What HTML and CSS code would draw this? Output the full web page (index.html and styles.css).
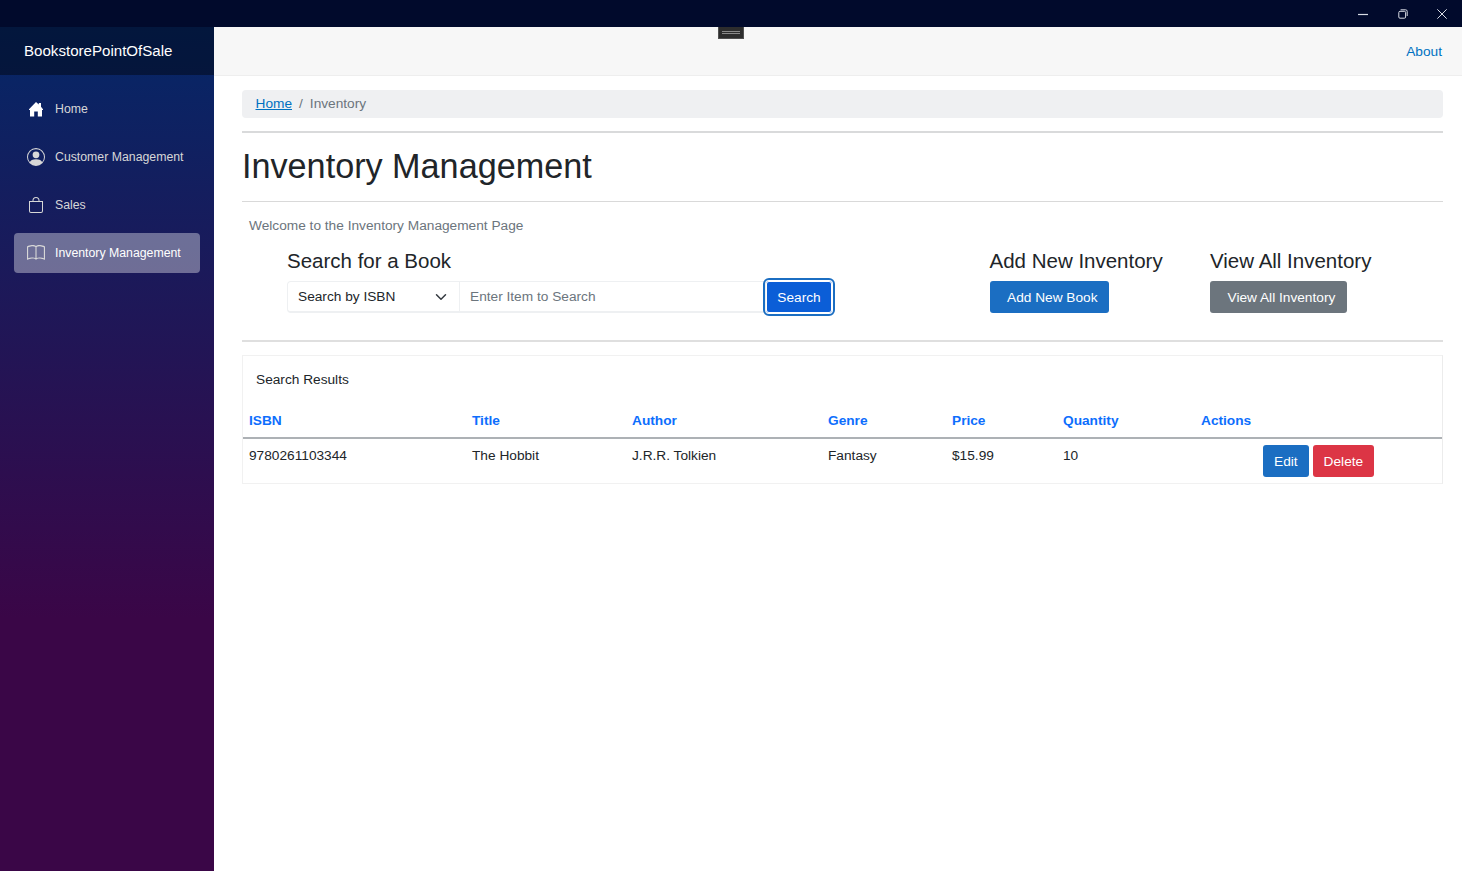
FILE: index.html
```html
<!DOCTYPE html>
<html lang="en">
<head>
  <meta charset="UTF-8">
  <title>BookstorePointOfSale</title>
  <link rel="stylesheet" href="styles.css">
</head>
<body>

  <!-- Window title bar -->
  <div class="titlebar">
    <div class="win-btn">
      <svg width="10" height="10" viewBox="0 0 10 10"><path d="M0 5.5H10" stroke="#d8dbe4" stroke-width="1.2"/></svg>
    </div>
    <div class="win-btn">
      <svg width="10" height="10" viewBox="0 0 10 10" fill="none" stroke="#d8dbe4"><rect x="0.8" y="2.3" width="6.8" height="6.9" rx="1.2"/><path d="M2.6 0.8H7.6Q9.2 0.8 9.2 2.4V7"/></svg>
    </div>
    <div class="win-btn">
      <svg width="10" height="10" viewBox="0 0 10 10"><path d="M0.3 0.3L9.7 9.7M9.7 0.3L0.3 9.7" stroke="#d8dbe4" stroke-width="1"/></svg>
    </div>
  </div>

  <div class="debug-handle"><span></span></div>

  <div class="app">
    <!-- Sidebar -->
    <aside class="sidebar">
      <div class="brand">BookstorePointOfSale</div>
      <nav class="nav">
        <a class="nav-item" href="#">
          <svg class="nav-icon small" viewBox="0 0 16 16" fill="#fff"><path d="M8 1 10.8 3.6V2H13V5.7L15 8.2V9H14V15.5H9.8V10.5H6.2V15.5H2V9H1V8.2Z"/></svg>
          Home
        </a>
        <a class="nav-item" href="#">
          <svg class="nav-icon" viewBox="0 0 16 16" fill="#d7d7d7"><path d="M11 6a3 3 0 1 1-6 0 3 3 0 0 1 6 0z"/><path fill-rule="evenodd" d="M0 8a8 8 0 1 1 16 0A8 8 0 0 1 0 8zm8-7a7 7 0 0 0-5.468 11.37C3.242 11.226 4.805 10 8 10s4.757 1.225 5.468 2.37A7 7 0 0 0 8 1z"/></svg>
          Customer Management
        </a>
        <a class="nav-item" href="#">
          <svg class="nav-icon small" viewBox="0 0 16 16" fill="#d7d7d7"><path d="M8 1a2.5 2.5 0 0 1 2.5 2.5V4h-5v-.5A2.5 2.5 0 0 1 8 1zm3.5 3v-.5a3.5 3.5 0 1 0-7 0V4H1v10a2 2 0 0 0 2 2h10a2 2 0 0 0 2-2V4h-3.5zM2 5h12v9a1 1 0 0 1-1 1H3a1 1 0 0 1-1-1V5z"/></svg>
          Sales
        </a>
        <a class="nav-item active" href="#">
          <svg class="nav-icon" viewBox="0 0 16 16" fill="#d7d7d7"><path d="M1 2.828c.885-.37 2.154-.769 3.388-.893 1.33-.134 2.458.063 3.112.752v9.746c-.935-.53-2.12-.603-3.213-.493-1.18.12-2.37.461-3.287.811V2.828zm7.5-.141c.654-.689 1.782-.886 3.112-.752 1.234.124 2.503.523 3.388.893v9.923c-.918-.35-2.107-.692-3.287-.81-1.094-.111-2.278-.039-3.213.492V2.687zM8 1.783C7.015.936 5.587.81 4.287.94c-1.514.153-3.042.672-3.994 1.105A.5.5 0 0 0 0 2.5v11a.5.5 0 0 0 .707.455c.882-.4 2.303-.881 3.68-1.02 1.409-.142 2.59.087 3.223.877a.5.5 0 0 0 .78 0c.633-.79 1.814-1.019 3.222-.877 1.378.139 2.8.62 3.681 1.02A.5.5 0 0 0 16 13.5v-11a.5.5 0 0 0-.293-.455c-.952-.433-2.48-.952-3.994-1.105C10.413.809 8.985.936 8 1.783z"/></svg>
          Inventory Management
        </a>
      </nav>
    </aside>

    <main class="main">
      <div class="top-row"><a href="#">About</a></div>

      <div class="content">
        <div class="breadcrumb">
          <a href="#">Home</a>
          <span class="sep">/</span>
          <span class="current">Inventory</span>
        </div>
        <hr class="rule first">
        <h1>Inventory Management</h1>
        <hr class="rule">
        <p class="welcome">Welcome to the Inventory Management Page</p>

        <div class="tools">
          <div class="search-col">
            <h4>Search for a Book</h4>
            <div class="input-group">
              <div class="select-box">
                Search by ISBN
                <svg width="12" height="12" viewBox="0 0 16 16" fill="none" stroke="#343a40" stroke-width="2" stroke-linecap="round" stroke-linejoin="round"><path d="M2 5l6 6 6-6"/></svg>
              </div>
              <div class="search-input">Enter Item to Search</div>
              <button class="btn btn-blue btn-focus">Search</button>
            </div>
          </div>
          <div class="add-col">
            <h4>Add New Inventory</h4>
            <button class="btn btn-blue btn-add">Add New Book</button>
          </div>
          <div class="view-col">
            <h4>View All Inventory</h4>
            <button class="btn btn-gray btn-add">View All Inventory</button>
          </div>
        </div>

        <hr class="rule third">

        <div class="results">
          <div class="results-title">Search Results</div>
          <table>
            <thead>
              <tr>
                <th class="c-isbn">ISBN</th>
                <th class="c-title">Title</th>
                <th class="c-author">Author</th>
                <th class="c-genre">Genre</th>
                <th class="c-price">Price</th>
                <th class="c-qty">Quantity</th>
                <th>Actions</th>
              </tr>
            </thead>
            <tbody>
              <tr>
                <td>9780261103344</td>
                <td>The Hobbit</td>
                <td>J.R.R. Tolkien</td>
                <td>Fantasy</td>
                <td>$15.99</td>
                <td>10</td>
                <td class="actions">
                  <button class="btn btn-edit">Edit</button>
                  <button class="btn btn-delete">Delete</button>
                </td>
              </tr>
            </tbody>
          </table>
        </div>
      </div>
    </main>
  </div>

</body>
</html>
```

FILE: styles.css
```css
* {
  box-sizing: border-box;
}

html, body {
  height: 100%;
}

body {
  margin: 0;
  font-family: "Liberation Sans", Arial, sans-serif;
  font-size: 13.7px;
  color: #212529;
  background-color: #fff;
  display: flex;
  flex-direction: column;
  overflow: hidden;
}

.titlebar {
  height: 27px;
  flex: none;
  background-color: #010a2c;
  display: flex;
  justify-content: flex-end;
  align-items: center;
}

.win-btn {
  width: 39.5px;
  display: flex;
  justify-content: center;
  align-items: center;
}

.debug-handle {
  position: absolute;
  top: 27px;
  left: 718px;
  width: 26px;
  height: 12px;
  background-color: #2d2d2d;
  border: 1px solid #505050;
  border-top: none;
  display: flex;
  justify-content: center;
  align-items: center;
}

.debug-handle span {
  display: block;
  width: 18px;
  height: 3px;
  border-top: 1px solid #8a8a8a;
  border-bottom: 1px solid #8a8a8a;
}

.app {
  flex: 1;
  display: flex;
  min-height: 0;
}

.sidebar {
  width: 214px;
  flex: none;
  background-image: linear-gradient(180deg, rgb(5, 39, 103) 0%, #3a0647 70%);
}

.brand {
  height: 48px;
  padding-left: 24px;
  padding-bottom: 2px;
  display: flex;
  align-items: center;
  color: #fff;
  font-size: 15.1px;
  background-color: rgba(0, 0, 0, 0.4);
}

.nav {
  padding-top: 14px;
}

.nav-item {
  display: flex;
  align-items: center;
  height: 40px;
  margin: 0 14px 8px;
  padding-left: 13px;
  border-radius: 4px;
  color: #d7d7d7;
  font-size: 12.3px;
  text-decoration: none;
}

.nav-item.active {
  background-color: rgba(255, 255, 255, 0.37);
  color: #fff;
}

.nav-icon {
  width: 18px;
  height: 18px;
  margin-right: 10px;
  flex: none;
}

.nav-icon.small {
  width: 16px;
  height: 16px;
  margin: 0 11px 0 1px;
}

.main {
  flex: 1;
  min-width: 0;
}

.top-row {
  height: 49px;
  background-color: #f7f7f7;
  border-bottom: 1px solid #eeeeee;
  display: flex;
  justify-content: flex-end;
  align-items: center;
  padding-right: 20px;
}

.top-row a {
  color: #0071c1;
  text-decoration: none;
}

.content {
  padding: 14px 19.5px 0 28px;
}

.breadcrumb {
  height: 28px;
  display: flex;
  align-items: center;
  padding-left: 13.5px;
  padding-bottom: 1px;
  background-color: #eff0f2;
  border-radius: 4px;
  color: #6c757d;
}

.breadcrumb a {
  color: #0071c1;
}

.sep {
  margin: 0 7px;
}

.rule {
  margin: 0;
  border: none;
  border-top: 1px solid #d9d9d9;
}

.rule.first {
  margin-top: 13px;
  border-top-width: 2px;
  border-top-color: #d9dadb;
}

.rule.third {
  border-top-width: 2px;
  border-top-color: #dfdfdf;
  margin-top: 27px;
}

h1 {
  margin: 0;
  height: 68px;
  padding-bottom: 2px;
  display: flex;
  align-items: center;
  font-size: 34.2px;
  font-weight: 400;
}

.welcome {
  margin: 15px 0 0 7px;
  color: #6c757d;
  line-height: 17px;
}

.tools {
  display: flex;
  margin-top: 14px;
  padding-left: 45px;
}

h4 {
  margin: 0 0 8px;
  font-size: 20.5px;
  font-weight: 400;
  line-height: 25px;
}

.search-col {
  width: 702.5px;
}

.add-col {
  width: 220.5px;
}

.input-group {
  display: flex;
  width: 545px;
  height: 32px;
}

.select-box {
  width: 173px;
  padding: 0 12px 0 10px;
  display: flex;
  justify-content: space-between;
  align-items: center;
  border: 1px solid #eef0f2;
  border-bottom-width: 2px;
  border-radius: 4px 0 0 4px;
}

.search-input {
  flex: 1;
  display: flex;
  align-items: center;
  padding-left: 10px;
  color: #6c757d;
  border: 1px solid #eef0f2;
  border-left: none;
  border-bottom-width: 2px;
}

.btn {
  font-family: inherit;
  font-size: 13.7px;
  color: #fff;
  border: none;
  border-radius: 3px;
  cursor: pointer;
}

.btn-blue {
  background-color: #1b6ec2;
}

.btn-gray {
  background-color: #6c757d;
}

.btn-focus {
  width: 66px;
  background-color: #0b5ed7;
  outline: 2px solid #1b6ec2;
  outline-offset: 1px;
  box-shadow: 0 0 0 1px #fff inset;
}

.btn-add {
  height: 32px;
  padding: 0 11.5px 0 17.5px;
}

.results {
  margin-top: 13px;
  border: 1px solid #f1f1f1;
  border-right-color: #ececec;
}

.results-title {
  height: 47px;
  padding-left: 13px;
  display: flex;
  align-items: center;
}

table {
  width: 100%;
  border-collapse: collapse;
  table-layout: fixed;
}

th {
  height: 35px;
  padding: 0 6px;
  text-align: left;
  color: #0d6efd;
  font-weight: 700;
  border-bottom: 2px solid #adb1b5;
}

td {
  height: 45px;
  padding: 9px 6px 0;
  vertical-align: top;
}

.c-isbn { width: 223px; }
.c-title { width: 160px; }
.c-author { width: 196px; }
.c-genre { width: 124px; }
.c-price { width: 111px; }
.c-qty { width: 138px; }

td.actions {
  padding: 6px 0 0 68px;
  white-space: nowrap;
  font-size: 0;
}

.btn-edit,
.btn-delete {
  height: 32px;
  padding: 0 11px;
  font-size: 13.7px;
}

.btn-edit {
  background-color: #1b6ec2;
  margin-right: 4px;
}

.btn-delete {
  background-color: #dc3545;
}
```
